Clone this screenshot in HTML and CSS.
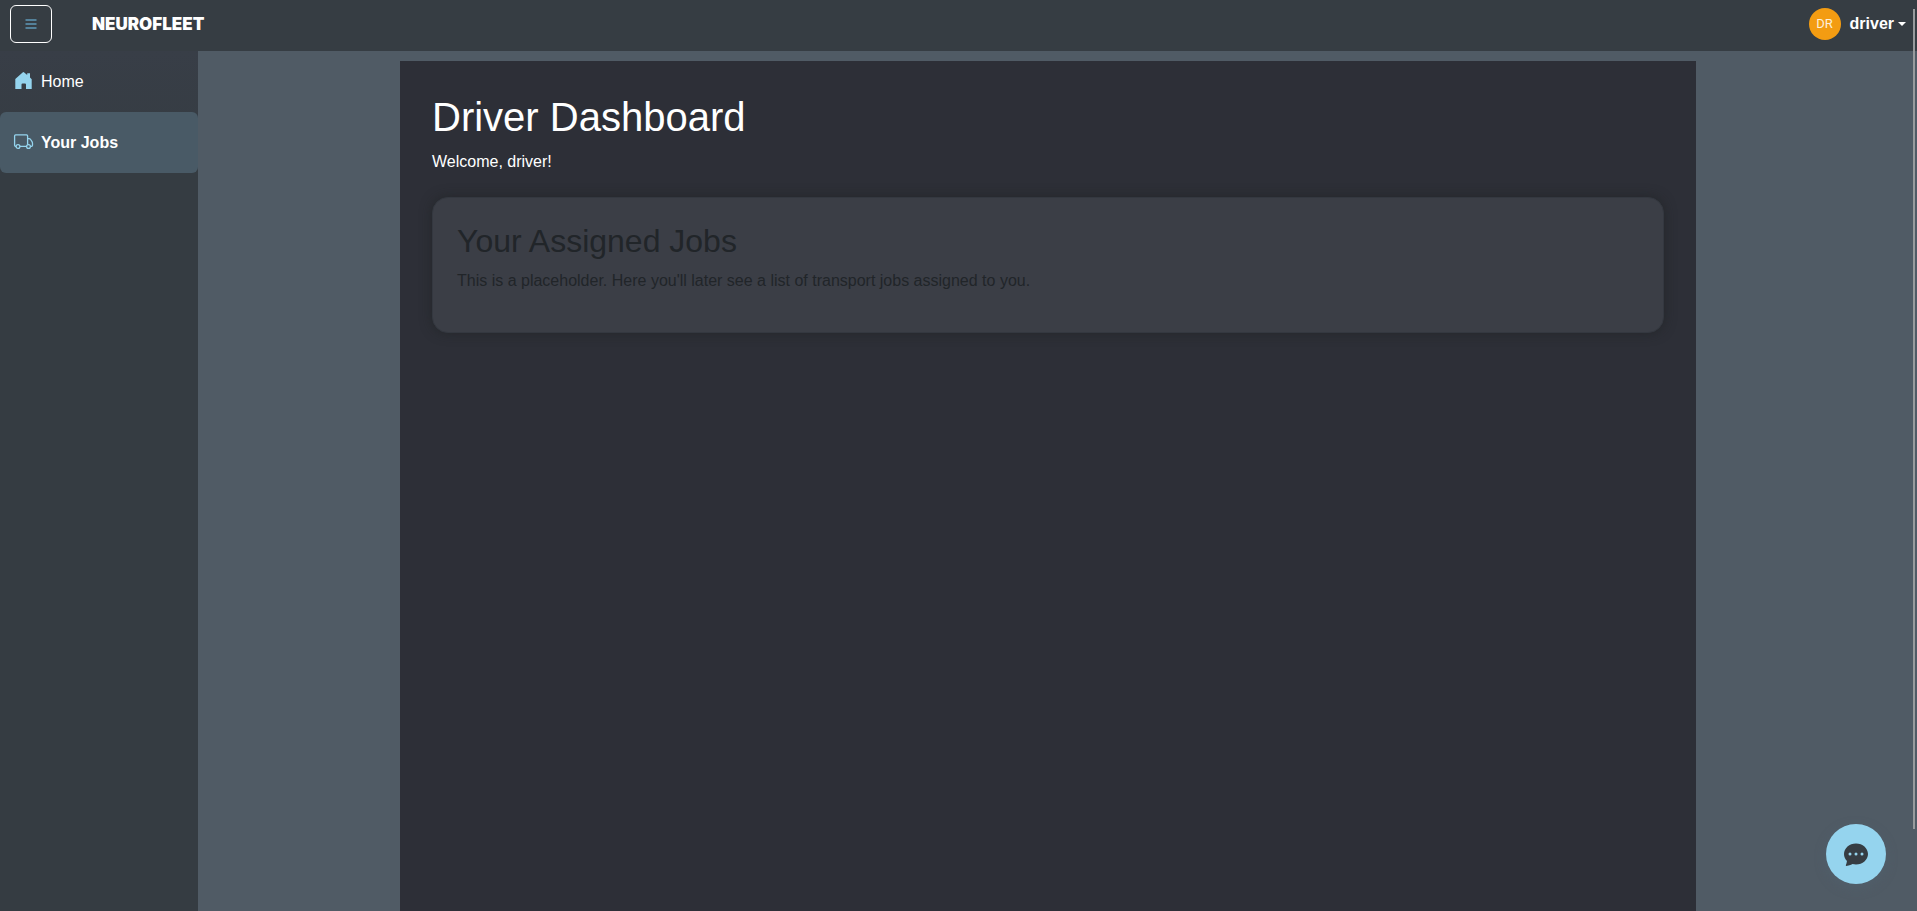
FILE: index.html
```html
<!DOCTYPE html>
<html lang="en">
<head>
<meta charset="utf-8">
<title>Driver Dashboard</title>
<link rel="stylesheet" href="styles.css">
</head>
<body>
<header class="topbar">
  <button class="menu-toggle" type="button" aria-label="Toggle menu">
    <svg width="16" height="16" viewBox="0 0 16 16" fill="none" stroke="currentColor" stroke-width="1.6" aria-hidden="true"><path d="M2.500 4h11M2.500 8h11M2.500 12h11"/></svg>
  </button>
  <a class="brand" href="#">NEUROFLEET</a>
  <button class="user-menu" type="button" aria-haspopup="true">
    <span class="avatar">DR</span>
    <span class="user-name">driver</span>
    <span class="caret"></span>
  </button>
</header>
<div class="shell">
  <nav class="sidebar">
    <a class="nav-link" href="#">
      <svg class="nav-icon" viewBox="0 0 19 19" fill="currentColor" aria-hidden="true"><path d="M1.300 7 8.600.4Q9.400-.2 10.200.4L13.200 3V1.200H16V5.600L17.700 7.200V17H12V12.500Q12 11.500 11 11.500H8.500Q7.500 11.500 7.500 12.500V17H1.300Z"/></svg>
      <span>Home</span>
    </a>
    <a class="nav-link active" href="#" aria-current="page">
      <svg class="nav-icon" viewBox="0 0 19 19" fill="none" stroke="currentColor" stroke-width="1.3" aria-hidden="true"><path d="M2.100 13.300H1.600Q.6 13.300.6 12.300V2.900Q.6 1.900 1.600 1.900H12.600Q13.600 1.900 13.600 2.900V11.700M12.600 13.300H5.900M13.600 5.600H15Q16 5.600 16.600 6.500L18 8.700Q18.500 9.500 18.500 10.500V12.300Q18.500 13.300 17.500 13.300H16.400"/><circle cx="4" cy="13.500" r="1.900"/><circle cx="14.500" cy="13.500" r="1.900"/></svg>
      <span>Your Jobs</span>
    </a>
  </nav>
  <main class="main">
    <div class="panel">
      <h1>Driver Dashboard</h1>
      <p>Welcome, driver!</p>
      <section class="card">
        <h2>Your Assigned Jobs</h2>
        <p>This is a placeholder. Here you'll later see a list of transport jobs assigned to you.</p>
      </section>
    </div>
  </main>
</div>
<button class="chat" type="button" aria-label="Open chat">
  <svg width="24" height="24" viewBox="0 0 16 16" fill="currentColor" aria-hidden="true"><path d="M16 8c0 3.866-3.582 7-8 7a9 9 0 0 1-2.347-.306c-.584.296-1.925.864-4.181 1.234-.200.032-.352-.176-.273-.362.354-.836.674-1.950.770-2.966C.744 11.370 0 9.760 0 8c0-3.866 3.582-7 8-7s8 3.134 8 7M5 8a1 1 0 1 0-2 0 1 1 0 0 0 2 0m4 0a1 1 0 1 0-2 0 1 1 0 0 0 2 0m3 1a1 1 0 1 0 0-2 1 1 0 0 0 0 2"/></svg>
</button>
<div class="scroll-thumb"></div>
</body>
</html>
```
FILE: styles.css
```css
* { box-sizing: border-box; }

body {
  margin: 0;
  min-height: 100vh;
  display: flex;
  flex-direction: column;
  background: #505b65;
  color: #fff;
  font: 16px/24px "Liberation Sans", Arial, sans-serif;
}

a { color: inherit; text-decoration: none; }
button { font: inherit; color: inherit; cursor: pointer; }
h1, h2, p { margin: 0; font-weight: 400; }

.topbar {
  display: flex;
  align-items: flex-start;
  height: 51px;
  padding: 5px 10px;
  background: #363d43;
}

.menu-toggle {
  display: flex;
  align-items: center;
  justify-content: center;
  width: 42px;
  height: 38px;
  padding: 0;
  border: 1px solid #fff;
  border-radius: 6px;
  background: none;
  color: #5f98b8;
}

.brand {
  margin-left: 40px;
  padding-top: 7px;
  font: 900 17px/24px Inter, sans-serif;
}

.user-menu {
  display: flex;
  align-items: center;
  margin-left: auto;
  padding: 3px 0;
  border: 0;
  background: none;
  font-weight: 700;
}

.avatar {
  width: 32px;
  margin-right: 9px;
  border-radius: 50%;
  background: #f39c12;
  color: #fdf0dc;
  font: 13px/32px Roboto, sans-serif;
  text-align: center;
}

.caret {
  margin: 0 1px 0 4px;
  border: 4px solid transparent;
  border-top-color: #fff;
  border-bottom: 0;
}

.shell { display: flex; flex: 1; }

.sidebar {
  flex: none;
  width: 198px;
  background: linear-gradient(#383e47, #353c42 120px);
}

.nav-link {
  display: flex;
  align-items: center;
  gap: 8px;
  height: 61px;
  padding: 0 14px;
  border-radius: 6px;
}

.nav-link.active { background: #495a66; font-weight: 700; }
.nav-icon { width: 19px; height: 19px; overflow: visible; color: #95d4ee; }

.main { flex: 1; padding: 10px 19px 0 0; display: flex; justify-content: center; }

.panel {
  width: 100%;
  max-width: 1296px;
  padding: 32px;
  background: #2d2f37;
}

.panel h1 { margin-bottom: 9px; font-size: 40px; line-height: 48px; }

.card {
  margin-top: 23px;
  padding: 24px;
  border: 1px solid #343840;
  border-radius: 16px;
  background: #3b3e46;
  box-shadow: 0 0 12px rgba(30, 34, 34, 0.6);
  color: #212529;
}

.card h2 { margin-bottom: 9px; font-size: 32px; line-height: 38px; }
.card p { margin-bottom: 15px; }

.chat {
  position: fixed;
  right: 31px;
  bottom: 27px;
  display: flex;
  align-items: center;
  justify-content: center;
  width: 60px;
  height: 60px;
  padding: 0;
  border: 0;
  border-radius: 50%;
  background: #95d4ee;
  color: #363d43;
  box-shadow: 0 4px 12px rgba(80, 100, 115, 0.4);
}

.scroll-thumb {
  position: fixed;
  top: 9px;
  right: 2px;
  width: 2px;
  height: 90vh;
  background: #989b9d;
}
```
